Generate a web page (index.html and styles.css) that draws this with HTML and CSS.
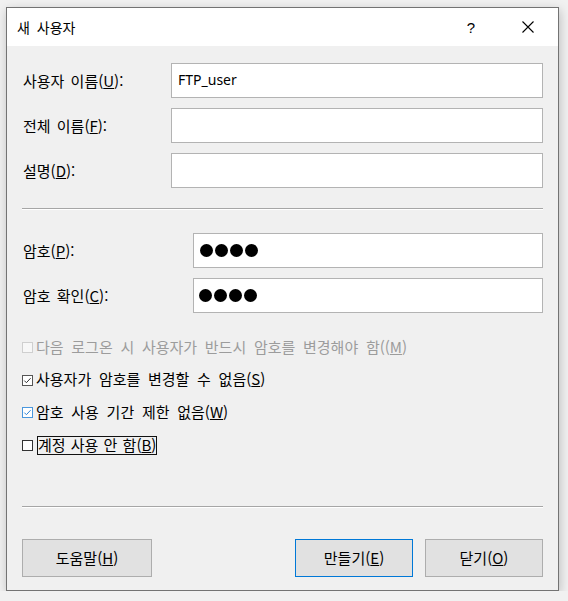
FILE: index.html
```html
<!DOCTYPE html>
<html lang="ko">
<head>
<meta charset="utf-8">
<title>새 사용자</title>
<link rel="stylesheet" href="styles.css">
</head>
<body>
<div class="window">
  <div class="titlebar">
    <span class="title">새 사용자</span>
    <span class="cap cap-help">?</span>
    <span class="cap cap-close">
      <svg width="12" height="12" viewBox="0 0 12 12"><path d="M0.5 0.5 L11.5 11.5 M11.5 0.5 L0.5 11.5" stroke="#000" stroke-width="1.1" fill="none"/></svg>
    </span>
  </div>
  <div class="body">
    <div class="fields">
      <div class="row"><span class="label">사용자 이름(<u>U</u>):</span><div class="input">FTP_user</div></div>
      <div class="row"><span class="label">전체 이름(<u>F</u>):</span><div class="input"></div></div>
      <div class="row"><span class="label">설명(<u>D</u>):</span><div class="input"></div></div>
    </div>
    <div class="sep sep-top"></div>
    <div class="fields pw">
      <div class="row"><span class="label">암호(<u>P</u>):</span><div class="input"><span class="dot"></span><span class="dot"></span><span class="dot"></span><span class="dot"></span></div></div>
      <div class="row"><span class="label">암호 확인(<u>C</u>):</span><div class="input"><span class="dot"></span><span class="dot"></span><span class="dot"></span><span class="dot"></span></div></div>
    </div>
    <div class="checks">
      <div class="check disabled">
        <svg class="box" width="11" height="11" viewBox="0 0 11 11"><rect x="0.5" y="0.5" width="10" height="10" fill="#f7f7f7" stroke="#cfcfcf"/></svg>
        <span>다음 로그온 시 사용자가 반드시 암호를 변경해야 함((<u>M</u>)</span>
      </div>
      <div class="check">
        <svg class="box" width="11" height="11" viewBox="0 0 11 11"><rect x="0.5" y="0.5" width="10" height="10" fill="#fff" stroke="#555"/><path d="M2.3 5.6 L4.4 7.7 L8.6 3.2" stroke="#333" stroke-width="1" fill="none"/></svg>
        <span>사용자가 암호를 변경할 수 없음(<u>S</u>)</span>
      </div>
      <div class="check">
        <svg class="box" width="11" height="11" viewBox="0 0 11 11"><rect x="0.5" y="0.5" width="10" height="10" fill="#fff" stroke="#4a97dd"/><path d="M2.3 5.6 L4.4 7.7 L8.6 3.2" stroke="#2f86d8" stroke-width="1" fill="none"/></svg>
        <span>암호 사용 기간 제한 없음(<u>W</u>)</span>
      </div>
      <div class="check">
        <svg class="box" width="11" height="11" viewBox="0 0 11 11"><rect x="0.5" y="0.5" width="10" height="10" fill="#fff" stroke="#333"/></svg>
        <span class="focus">계정 사용 안 함(<u>B</u>)</span>
      </div>
    </div>
    <div class="sep sep-bottom"></div>
    <div class="buttons">
      <button class="btn btn-help">도움말(<u>H</u>)</button>
      <span class="spacer"></span>
      <button class="btn btn-default">만들기(<u>E</u>)</button>
      <button class="btn">닫기(<u>O</u>)</button>
    </div>
  </div>
</div>
</body>
</html>
```

FILE: styles.css
```css
html, body {
  margin: 0;
  padding: 0;
  background: #f1f1f1;
}
body {
  font-family: "Noto Sans CJK KR", "Noto Sans", sans-serif;
  font-size: 15px;
  color: #000;
  padding: 7px 0 0 6px;
}
.window {
  width: 551px;
  height: 582px;
  border: 1px solid #737373;
  background: #f0f0f0;
  box-shadow: 1px 3px 10px rgba(0,0,0,0.22);
  display: flex;
  flex-direction: column;
}
.titlebar {
  height: 38px;
  background: #fff;
  display: flex;
  align-items: center;
  flex: none;
}
.title {
  padding-left: 10px;
  font-size: 14px;
  flex: 1;
  line-height: 1;
  padding-bottom: 1px;
  word-spacing: 3px;
}
.cap {
  display: flex;
  align-items: center;
  justify-content: center;
  height: 38px;
}
.cap-help {
  width: 46px;
  font-family: "Liberation Sans", sans-serif;
  font-size: 15px;
  margin-right: 11px;
}
.cap-close {
  width: 46px;
  margin-right: 7px;
}
.body {
  flex: 1;
  padding: 17px 15px 0 16px;
  display: flex;
  flex-direction: column;
}
.fields {
  display: flex;
  flex-direction: column;
  gap: 10px;
}
.row {
  display: flex;
  align-items: center;
  height: 35px;
}
.label {
  width: 148px;
  flex: none;
  padding-bottom: 1px;
  word-spacing: 2px;
}
.pw .label {
  width: 170px;
}
.input {
  flex: 1;
  border: 1px solid #b3b3b3;
  background: #fff;
  display: flex;
  align-items: center;
  padding: 0 0 2px 5px;
  box-sizing: content-box;
  height: 31px;
  font-size: 14px;
  font-family: "Noto Sans", "Noto Sans CJK KR", sans-serif;
}
.row:first-child .input {
  padding-left: 6px;
}
.dot {
  width: 13px;
  height: 13px;
  border-radius: 50%;
  background: #000;
  margin-right: 2px;
  margin-top: 1px;
}
.sep {
  border-top: 1px solid #a6a6a6;
  border-bottom: 1px solid #ffffff;
  height: 0;
  margin-left: -1px;
}
.sep-top {
  margin-top: 20px;
  margin-bottom: 23px;
}
.checks {
  margin-top: 18px;
  display: flex;
  flex-direction: column;
}
.check {
  height: 32.5px;
  display: flex;
  align-items: center;
  margin-left: -1px;
}
.box {
  flex: none;
  margin-right: 3px;
  margin-top: 1px;
}
.check span {
  line-height: 16px;
  padding: 0 0 1px 0;
  word-spacing: 3.5px;
}
.disabled {
  color: #9c9c9c;
}
.check span.focus {
  border: 1px solid #111;
  padding: 0 0 1px 0;
  margin-left: 1px;
  margin-top: 2px;
  word-spacing: 1px;
}
.sep-bottom {
  margin-top: 45px;
}
.buttons {
  display: flex;
  margin-top: 31px;
  margin-left: -1px;
}
.spacer {
  flex: 1;
}
.btn {
  height: 38px;
  width: 118px;
  background: #e1e1e1;
  border: 1px solid #adadad;
  font-family: "Noto Sans CJK KR", "Noto Sans", sans-serif;
  font-size: 15px;
  color: #000;
  padding: 0 0 1px 0;
  margin: 0;
}
.btn-help {
  width: 130px;
}
.btn-default {
  border-color: #0078d7;
  margin-right: 12px;
}
```
